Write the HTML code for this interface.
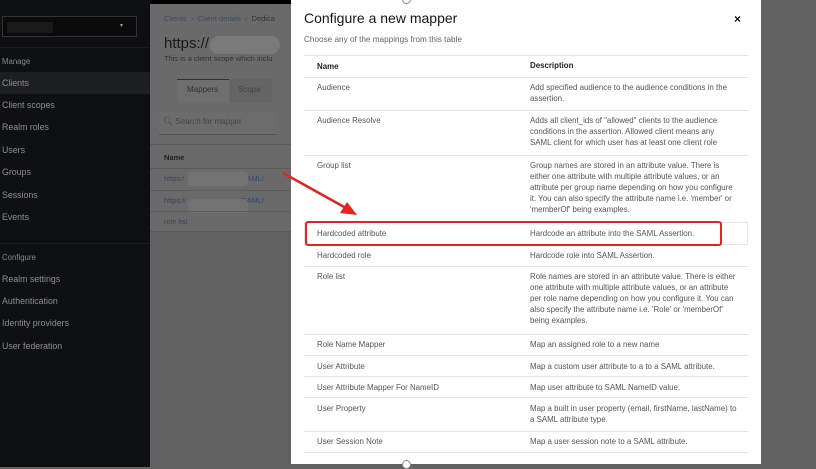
<!DOCTYPE html>
<html><head><meta charset="utf-8"><style>
*{margin:0;padding:0;box-sizing:border-box}
body{width:816px;height:467px;overflow:hidden;position:relative;font-family:"Liberation Sans",sans-serif;background:#626262}
.a{position:absolute;white-space:nowrap}
#side{position:absolute;left:0;top:0;width:150px;height:467px;background:#0f1012}
.si{position:absolute;left:2px;font-size:8.8px;color:#8e8e8e}
#cont{position:absolute;left:150px;top:4px;width:141px;height:228px;background:#6a6a6a}
#modal{position:absolute;left:291px;top:0;width:470px;height:464px;background:#fff}
.n{position:absolute;left:26px;font-size:7.9px;color:#555}
.d{position:absolute;left:239px;font-size:7.9px;color:#555;line-height:11px;white-space:normal;width:207px}
.l{position:absolute;left:13px;width:444px;height:1px;background:#e4e4e4}
</style></head><body>
<div class="a" style="left:0;top:0;width:291px;height:4px;background:#000"></div>
<div id="side">
<div class="a" style="left:2px;top:16px;width:135px;height:21px;border:1px solid #333;background:#0b0b0c"></div>
<div class="a" style="left:7px;top:22px;width:46px;height:11px;background:#1a1a1a"></div>
<div class="a" style="left:120px;top:22px;color:#999;font-size:6px">▾</div>
<div class="a" style="left:0;top:47px;width:150px;height:1px;background:#1c1c1e"></div>
<div class="si" style="top:57px;font-size:7.8px;color:#888">Manage</div>
<div class="a" style="left:0;top:72px;width:150px;height:22px;background:#1d1e21"></div>
<div class="si" style="top:78px">Clients</div>
<div class="si" style="top:100px">Client scopes</div>
<div class="si" style="top:122px">Realm roles</div>
<div class="si" style="top:145px">Users</div>
<div class="si" style="top:167px">Groups</div>
<div class="si" style="top:190px">Sessions</div>
<div class="si" style="top:212px">Events</div>
<div class="a" style="left:0;top:243px;width:150px;height:1px;background:#1c1c1e"></div>
<div class="si" style="top:253px;font-size:7.8px;color:#888">Configure</div>
<div class="si" style="top:274px">Realm settings</div>
<div class="si" style="top:296px">Authentication</div>
<div class="si" style="top:318px">Identity providers</div>
<div class="si" style="top:341px">User federation</div>
</div>
<div id="cont">
<div class="a" style="left:14px;top:10px;font-size:7.5px;color:#3c4a66">Clients &nbsp;›&nbsp; Client details &nbsp;›&nbsp; <span style="color:#333">Dedica</span></div>
<div class="a" style="left:14px;top:31px;font-size:15px;color:#1a1a1a">https://</div>
<div class="a" style="left:60px;top:32px;width:70px;height:18px;border-radius:9px;background:#7a7a7a"></div>
<div class="a" style="left:14px;top:50px;font-size:7.5px;color:#333">This is a client scope which inclu</div>
<div class="a" style="left:27px;top:75px;width:52px;height:24px;background:#6e6e6e;border-top:1px solid #234"></div>
<div class="a" style="left:37px;top:81px;font-size:8px;color:#333">Mappers</div>
<div class="a" style="left:80px;top:75px;width:42px;height:24px;background:#646464"></div>
<div class="a" style="left:88px;top:81px;font-size:8px;color:#444">Scope</div>
<div class="a" style="left:9px;top:108px;width:118px;height:23px;background:#6c6c6c;border-bottom:1px solid #555"></div>
<div class="a" style="left:13px;top:113px;font-size:8px;color:#444">🔍︎ Search for mapper</div>
<div class="a" style="left:0;top:140px;width:141px;height:1px;background:#5c5c5c"></div>
<div class="a" style="left:14px;top:149px;font-size:7.5px;color:#222;font-weight:bold">Name</div>
<div class="a" style="left:0;top:164px;width:141px;height:1px;background:#5c5c5c"></div>
<div class="a" style="left:14px;top:170px;font-size:7.4px;color:#34456a">https:/&nbsp;&nbsp;&nbsp;&nbsp;&nbsp;&nbsp;&nbsp;&nbsp;&nbsp;&nbsp;&nbsp;&nbsp;&nbsp;&nbsp;&nbsp;&nbsp;&nbsp;&nbsp;&nbsp;&nbsp;&nbsp;&nbsp;om/SAML/</div>
<div class="a" style="left:38px;top:168px;width:60px;height:14px;background:#727272;border-radius:4px"></div>
<div class="a" style="left:0;top:186px;width:141px;height:1px;background:#5c5c5c"></div>
<div class="a" style="left:14px;top:192px;font-size:7.4px;color:#34456a">https://&nbsp;&nbsp;&nbsp;&nbsp;&nbsp;&nbsp;&nbsp;&nbsp;&nbsp;&nbsp;&nbsp;&nbsp;&nbsp;&nbsp;&nbsp;&nbsp;&nbsp;&nbsp;&nbsp;&nbsp;&nbsp;om/SAML/</div>
<div class="a" style="left:38px;top:195px;width:60px;height:14px;background:#727272;border-radius:4px"></div>
<div class="a" style="left:0;top:207px;width:141px;height:1px;background:#5c5c5c"></div>
<div class="a" style="left:14px;top:213px;font-size:7.4px;color:#34456a">role list</div>
<div class="a" style="left:0;top:227px;width:141px;height:1px;background:#5c5c5c"></div>
</div>
<div id="modal">
<div class="a" style="left:111px;top:-5px;width:9px;height:9px;border:1px solid #888;border-radius:50%"></div>
<div class="a" style="left:13px;top:10px;font-size:14px;color:#151515">Configure a new mapper</div>
<div class="a" style="left:443px;top:12px;font-size:12px;font-weight:bold;color:#111">×</div>
<div class="a" style="left:13px;top:35px;font-size:8.2px;color:#666">Choose any of the mappings from this table</div>
<div class="l" style="top:55px"></div>
<div class="n" style="top:62px;font-weight:bold;color:#222">Name</div>
<div class="d" style="top:60px;font-weight:bold;color:#222">Description</div>
<div class="l" style="top:77px"></div>
<div class="n" style="top:83px">Audience</div>
<div class="d" style="top:82px">Add specified audience to the audience conditions in the assertion.</div>
<div class="l" style="top:110px"></div>
<div class="n" style="top:116px">Audience Resolve</div>
<div class="d" style="top:115px">Adds all client_ids of "allowed" clients to the audience conditions in the assertion. Allowed client means any SAML client for which user has at least one client role</div>
<div class="l" style="top:155px"></div>
<div class="n" style="top:161px">Group list</div>
<div class="d" style="top:160px">Group names are stored in an attribute value. There is either one attribute with multiple attribute values, or an attribute per group name depending on how you configure it. You can also specify the attribute name i.e. 'member' or 'memberOf' being examples.</div>
<div class="a" style="left:13px;top:222px;width:444px;height:23px;border:1px solid #e6e6e6"></div>
<div class="n" style="top:229px">Hardcoded attribute</div>
<div class="d" style="top:228px">Hardcode an attribute into the SAML Assertion.</div>
<div class="n" style="top:251px">Hardcoded role</div>
<div class="d" style="top:250px">Hardcode role into SAML Assertion.</div>
<div class="l" style="top:266px"></div>
<div class="n" style="top:272px">Role list</div>
<div class="d" style="top:271px">Role names are stored in an attribute value. There is either one attribute with multiple attribute values, or an attribute per role name depending on how you configure it. You can also specify the attribute name i.e. 'Role' or 'memberOf' being examples.</div>
<div class="l" style="top:334px"></div>
<div class="n" style="top:340px">Role Name Mapper</div>
<div class="d" style="top:339px">Map an assigned role to a new name</div>
<div class="l" style="top:355px"></div>
<div class="n" style="top:362px">User Attribute</div>
<div class="d" style="top:361px">Map a custom user attribute to a to a SAML attribute.</div>
<div class="l" style="top:376px"></div>
<div class="n" style="top:383px">User Attribute Mapper For NameID</div>
<div class="d" style="top:382px">Map user attribute to SAML NameID value.</div>
<div class="l" style="top:397px"></div>
<div class="n" style="top:404px">User Property</div>
<div class="d" style="top:403px">Map a built in user property (email, firstName, lastName) to a SAML attribute type.</div>
<div class="l" style="top:431px"></div>
<div class="n" style="top:437px">User Session Note</div>
<div class="d" style="top:436px">Map a user session note to a SAML attribute.</div>
<div class="l" style="top:452px"></div>
<div class="a" style="left:111px;top:460px;width:9px;height:9px;border:1px solid #888;border-radius:50%;background:#fff"></div>
</div>
<div class="a" style="left:305px;top:221px;width:417px;height:25px;border:2px solid #e8221c;border-radius:3px"></div>
<svg class="a" style="left:0;top:0" width="816" height="467"><line x1="283" y1="173" x2="346" y2="208" stroke="#e8221c" stroke-width="2.5"/><polygon points="357,215 340,213 347,202" fill="#e8221c"/></svg>
</body></html>
